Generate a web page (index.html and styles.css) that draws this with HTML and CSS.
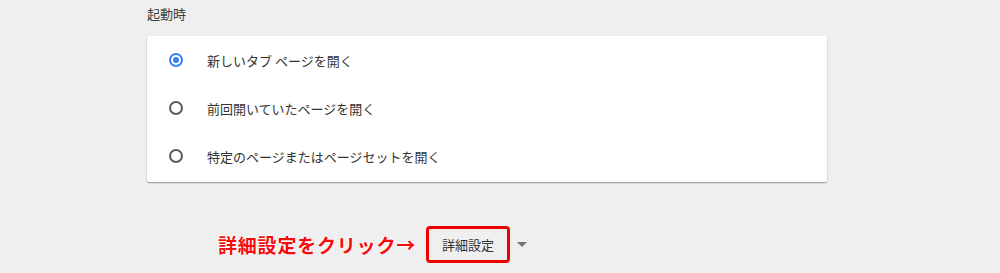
FILE: index.html
```html
<!DOCTYPE html>
<html lang="ja">
<head>
<meta charset="utf-8">
<link rel="stylesheet" href="styles.css">
</head>
<body>
<div class="page">
  <div class="section-title">起動時</div>
  <div class="card">
    <div class="row">
      <span class="radio checked"></span>
      <span class="label">新しいタブ ページを開く</span>
    </div>
    <div class="row">
      <span class="radio"></span>
      <span class="label">前回開いていたページを開く</span>
    </div>
    <div class="row">
      <span class="radio"></span>
      <span class="label">特定のページまたはページセットを開く</span>
    </div>
  </div>
  <div class="advanced">
    <span class="note">詳細設定をクリック→</span>
    <span class="adv-btn">詳細設定</span>
    <svg class="caret" width="10" height="6" viewBox="0 0 10 6"><path d="M0 0 L10 0 L5 5 Z" fill="#757575"/></svg>
  </div>
</div>
</body>
</html>
```
FILE: styles.css
```css
html, body {
  margin: 0;
  padding: 0;
  background: #efefef;
  font-family: "Noto Sans CJK JP", "Noto Sans", sans-serif;
  color: #333;
}
.page {
  width: 680px;
  margin-left: 147px;
  height: 273px;
}
.section-title {
  font-size: 13px;
  line-height: 20px;
  padding-top: 4px;
  height: 36px;
  box-sizing: border-box;
  color: #3c3c3c;
}
.card {
  background: #fff;
  border-radius: 2px;
  box-shadow: 0 1px 2px rgba(0,0,0,0.28), 0 1px 1px rgba(0,0,0,0.12);
  padding-bottom: 2px;
}
.row {
  height: 48px;
  display: flex;
  align-items: center;
}
.radio {
  width: 14px;
  height: 14px;
  box-sizing: border-box;
  border: 2px solid #5a5a5a;
  border-radius: 50%;
  margin-left: 22px;
  margin-right: 24px;
  display: flex;
  align-items: center;
  justify-content: center;
}
.radio.checked {
  border-color: #3b7ff1;
}
.radio.checked::after {
  content: "";
  width: 6px;
  height: 6px;
  border-radius: 50%;
  background: #3b7ff1;
}
.label {
  font-size: 13px;
  color: #333;
}
.advanced {
  display: flex;
  align-items: center;
  margin-top: 44px;
  margin-left: 71px;
}
.note {
  font-size: 19px;
  font-weight: bold;
  color: #f50d0d;
  text-shadow: 0 0 2px #fff, 0 0 2px #fff, 0 0 3px #fff;
  letter-spacing: 0.8px;
}
.adv-btn {
  margin-left: 10px;
  width: 84px;
  height: 37px;
  box-sizing: border-box;
  border: 3px solid #ee0000;
  border-radius: 4px;
  font-size: 13px;
  color: #333;
  display: flex;
  align-items: center;
  justify-content: center;
}
.caret {
  margin-left: 7px;
}
```
